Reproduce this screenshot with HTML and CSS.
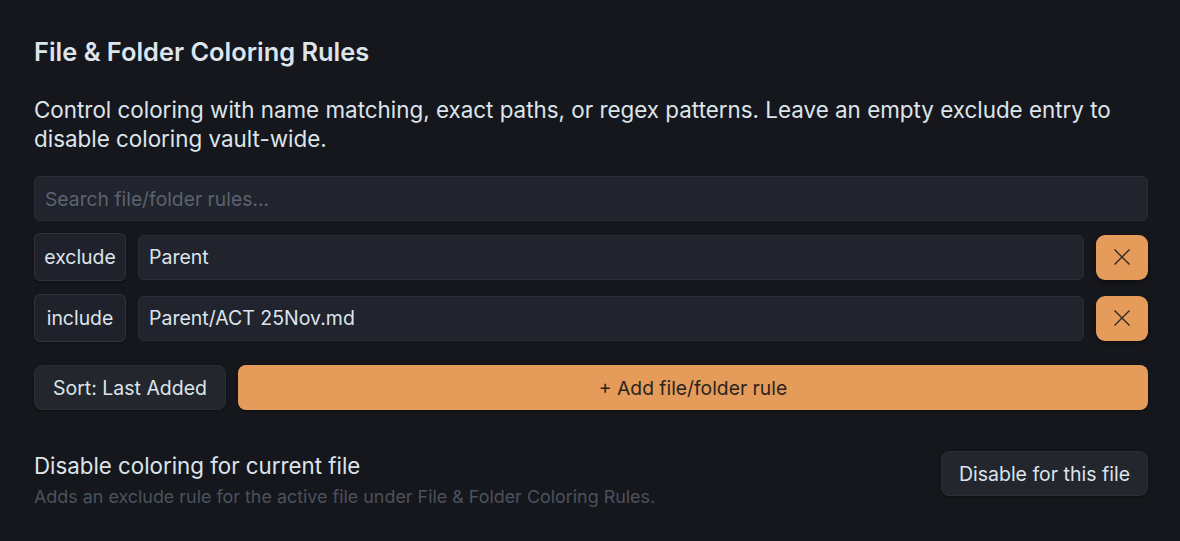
FILE: index.html
```html
<!DOCTYPE html>
<html>
<head>
<meta charset="utf-8">
<link rel="stylesheet" href="styles.css">
</head>
<body>
<div class="panel">
  <h2 class="title">File &amp; Folder Coloring Rules</h2>
  <p class="desc">Control coloring with name matching, exact paths, or regex patterns. Leave an empty exclude entry to disable coloring vault-wide.</p>
  <div class="search">Search file/folder rules...</div>
  <div class="rule">
    <button class="mode">exclude</button>
    <div class="field">Parent</div>
    <button class="remove"><svg width="18" height="18" viewBox="0 0 18 18"><path d="M1.5 1.5 L16.5 16.5 M16.5 1.5 L1.5 16.5" stroke="#2a2420" stroke-width="1.3" fill="none"/></svg></button>
  </div>
  <div class="rule second">
    <button class="mode">include</button>
    <div class="field">Parent/ACT 25Nov.md</div>
    <button class="remove"><svg width="18" height="18" viewBox="0 0 18 18"><path d="M1.5 1.5 L16.5 16.5 M16.5 1.5 L1.5 16.5" stroke="#2a2420" stroke-width="1.3" fill="none"/></svg></button>
  </div>
  <div class="actions">
    <button class="sort">Sort: Last Added</button>
    <button class="add">+ Add file/folder rule</button>
  </div>
  <div class="setting">
    <div class="info">
      <div class="name">Disable coloring for current file</div>
      <div class="hint">Adds an exclude rule for the active file under File &amp; Folder Coloring Rules.</div>
    </div>
    <button class="disable">Disable for this file</button>
  </div>
</div>
</body>
</html>
```
FILE: styles.css
```css
* { box-sizing: border-box; }
html, body { margin: 0; padding: 0; background: #16171c; }
body {
  font-family: Inter, "Noto Sans", sans-serif;
  color: #dce4ec;
}
.panel { padding: 36px 32px 0 34px; width: 1180px; }
.title {
  margin: 0;
  font-size: 25.4px;
  font-weight: 600;
  line-height: 32px;
  color: #dce4ec;
}
.desc {
  margin: 27px 0 0;
  font-size: 22.4px;
  line-height: 29px;
  color: #dce4ec;
  width: 1114px;
}
.search {
  margin-top: 23px;
  height: 45px;
  width: 1114px;
  background: #21232d;
  border: 1px solid #2b2e37;
  border-radius: 6px;
  padding: 0 10px;
  display: flex;
  align-items: center;
  font-size: 19.3px;
  color: #5b6470;
}
.rule {
  display: flex;
  align-items: center;
  gap: 12px;
  margin-top: 12px;
  width: 1114px;
  height: 48px;
}
.rule.second { margin-top: 13px; }
button {
  font-family: inherit;
  cursor: pointer;
}
.mode {
  height: 48px;
  width: 92px;
  background: #20222b;
  border: 1px solid #30333c;
  border-radius: 6px;
  color: #dce4ec;
  font-size: 19.4px;
  padding: 0;
  box-shadow: 0 1px 2px rgba(0,0,0,0.4);
}
.field {
  flex: 1;
  height: 45px;
  background: #21232d;
  border: 1px solid #2b2e37;
  border-radius: 6px;
  padding: 0 10px;
  display: flex;
  align-items: center;
  font-size: 19.5px;
  color: #dce4ec;
}
.remove {
  width: 52px;
  height: 45px;
  background: #e59c5a;
  border: none;
  border-radius: 9px;
  display: flex;
  align-items: center;
  justify-content: center;
  padding: 0;
  box-shadow: 0 2px 4px rgba(0,0,0,0.4);
}
.actions {
  display: flex;
  gap: 12px;
  margin-top: 23px;
  width: 1114px;
}
.sort {
  width: 192px;
  height: 45px;
  background: #23262c;
  border: 1px solid #2b2e35;
  border-radius: 8px;
  color: #dce4ec;
  font-size: 19.5px;
  padding: 0;
  box-shadow: 0 1px 3px rgba(0,0,0,0.4);
}
.add {
  flex: 1;
  height: 45px;
  background: #e59c5a;
  border: none;
  border-radius: 8px;
  color: #2a2420;
  font-size: 19.3px;
  box-shadow: 0 1px 3px rgba(0,0,0,0.4);
}
.setting {
  display: flex;
  justify-content: space-between;
  align-items: flex-start;
  margin-top: 41px;
  width: 1114px;
}
.name {
  margin-top: 1px;
  font-size: 22.3px;
  line-height: 28px;
  color: #dce4ec;
}
.hint {
  margin-top: 5px;
  font-size: 17.9px;
  line-height: 24px;
  color: #4a525c;
}
.disable {
  width: 207px;
  height: 45px;
  background: #23262c;
  border: 1px solid #2b2e35;
  border-radius: 8px;
  color: #dce4ec;
  font-size: 19.5px;
  padding: 0;
  box-shadow: 0 1px 3px rgba(0,0,0,0.4);
}
```
